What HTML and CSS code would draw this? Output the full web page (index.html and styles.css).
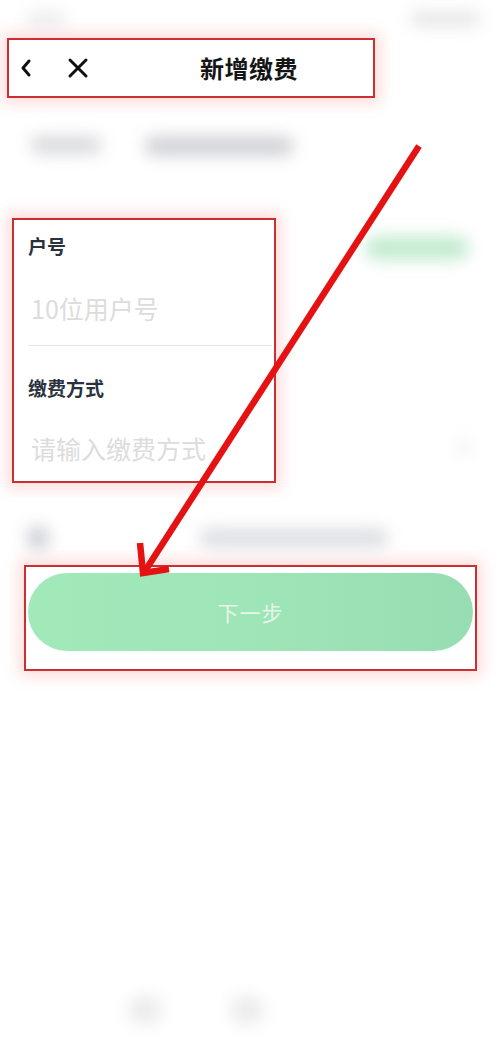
FILE: index.html
```html
<!DOCTYPE html>
<html lang="zh">
<head>
<meta charset="utf-8">
<title>新增缴费</title>
<link rel="stylesheet" href="styles.css">
</head>
<body>
<div class="page">
  <div class="status">
    <div class="blur blur-time"></div>
    <div class="blur blur-icons"></div>
  </div>

  <div class="mark header">
    <span class="nav-icon back">
      <svg width="14" height="20" viewBox="0 0 14 20"><path d="M10 3 L4 10 L10 17" fill="none" stroke="#111" stroke-width="3" stroke-linecap="round" stroke-linejoin="round"/></svg>
    </span>
    <span class="nav-icon close">
      <svg width="22" height="22" viewBox="0 0 22 22"><path d="M3 3 L19 19 M19 3 L3 19" fill="none" stroke="#111" stroke-width="3" stroke-linecap="round"/></svg>
    </span>
    <h1 class="title">新增缴费</h1>
  </div>

  <div class="tabs">
    <div class="blur blur-tab1"></div>
    <div class="blur blur-tab2"></div>
  </div>

  <div class="form-row">
    <div class="mark form-box">
      <div class="label first">户号</div>
      <div class="placeholder p1">10位用户号</div>
      <div class="divider"></div>
      <div class="label second">缴费方式</div>
      <div class="placeholder p2">请输入缴费方式</div>
    </div>
    <div class="side">
      <div class="blur blur-green"></div>
      <div class="blur blur-dot"></div>
    </div>
  </div>

  <div class="agree">
    <div class="blur blur-check"></div>
    <div class="blur blur-agree"></div>
  </div>

  <div class="mark btn-box">
    <div class="btn">下一步</div>
  </div>

  <div class="spacer"></div>

  <div class="bottom">
    <div class="blur blur-b1"></div>
    <div class="blur blur-b2"></div>
  </div>

  <svg class="arrow" width="500" height="1057" viewBox="0 0 500 1057">
    <g fill="none" stroke="#e41212" stroke-width="6.5" stroke-linecap="butt" stroke-linejoin="miter">
      <path d="M419 146 L145 571"/>
      <path d="M140 543 L143 573 L169 569"/>
    </g>
  </svg>
</div>
</body>
</html>
```

FILE: styles.css
```css
* { box-sizing: border-box; margin: 0; padding: 0; }
html, body { background: #ffffff; }
body {
  font-family: "Noto Sans CJK SC", "Noto Sans", "Liberation Sans", sans-serif;
  width: 500px;
  height: 1057px;
  overflow: hidden;
}
.page {
  position: relative;
  width: 500px;
  height: 1057px;
  display: flex;
  flex-direction: column;
}
.blur { filter: blur(8px); border-radius: 10px; }

.status {
  height: 38px;
  display: flex;
  justify-content: space-between;
  align-items: center;
  padding: 0 20px 0 26px;
}
.blur-time { width: 40px; height: 12px; background: #cfd0d4; opacity: 0.5; }
.blur-icons { width: 70px; height: 16px; background: #d4d4d6; opacity: 0.55; }

.mark {
  border: 2px solid #cc2f2f;
  box-shadow: 0 0 14px 5px rgba(255, 90, 90, 0.22);
  background: #ffffff;
}

.header {
  margin-left: 7px;
  width: 368px;
  height: 60px;
  display: flex;
  align-items: center;
  padding-left: 10px;
}
.nav-icon { display: flex; align-items: center; }
.back { width: 14px; height: 20px; }
.close { margin-left: 34px; width: 22px; height: 22px; }
.title {
  margin-left: 111px;
  font-size: 24px;
  font-weight: 700;
  color: #151515;
  letter-spacing: 0.5px;
  line-height: 30px;
}

.tabs {
  height: 120px;
  display: flex;
  align-items: flex-start;
  padding: 38px 0 0 30px;
  gap: 42px;
}
.blur-tab1 { width: 72px; height: 18px; background: #c9cad0; opacity: 0.7; }
.blur-tab2 { width: 150px; height: 20px; background: #c2c3ca; opacity: 0.75; }

.form-row {
  display: flex;
  align-items: flex-start;
}
.form-box {
  margin-left: 12px;
  width: 264px;
  height: 265px;
  padding: 0 0 0 14px;
  display: flex;
  flex-direction: column;
}
.label {
  font-size: 19px;
  font-weight: 700;
  color: #2a323e;
  line-height: 24px;
}
.label.first { margin-top: 14px; }
.label.second { margin-top: 30px; }
.placeholder {
  font-size: 25px;
  font-weight: 400;
  color: #dcdcdc;
  line-height: 32px;
  padding-left: 3px;
}
.p1 { margin-top: 34px; }
.p2 { margin-top: 32px; }
.divider {
  margin-top: 21px;
  height: 1px;
  background: #e6e6e6;
  margin-right: 2px;
}

.side {
  flex: 1;
  display: flex;
  flex-direction: column;
  align-items: flex-start;
  padding-left: 89px;
}
.blur-green {
  margin-top: 18px;
  width: 104px;
  height: 24px;
  background: #b9e7c9;
  border-radius: 12px;
  opacity: 0.85;
}
.blur-dot {
  margin-top: 180px;
  margin-left: 92px;
  width: 14px;
  height: 14px;
  background: #eeeeee;
  border-radius: 7px;
}

.agree {
  height: 82px;
  display: flex;
  align-items: flex-start;
  padding: 43px 0 0 27px;
  gap: 150px;
}
.blur-check { width: 22px; height: 24px; background: #b9bac2; opacity: 0.7; }
.blur-agree { width: 190px; height: 20px; background: #cdced4; opacity: 0.65; margin-top: 2px; }

.btn-box {
  margin-left: 24px;
  width: 453px;
  height: 106px;
  padding: 6px 2px 18px 2px;
}
.btn {
  height: 78px;
  border-radius: 39px;
  background: linear-gradient(90deg, #a1e9b9 0%, #9ee5b7 50%, #97ddb3 100%);
  color: #e4f7ea;
  font-size: 21px;
  line-height: 78px;
  text-align: center;
  letter-spacing: 1px;
}

.spacer { flex: 1; }

.bottom {
  height: 62px;
  display: flex;
  align-items: flex-start;
  padding-left: 128px;
  gap: 68px;
}
.blur-b1, .blur-b2 {
  width: 34px;
  height: 30px;
  background: #ececec;
  border-radius: 15px;
  filter: blur(8px);
}

.arrow {
  position: absolute;
  left: 0;
  top: 0;
  pointer-events: none;
}
```
